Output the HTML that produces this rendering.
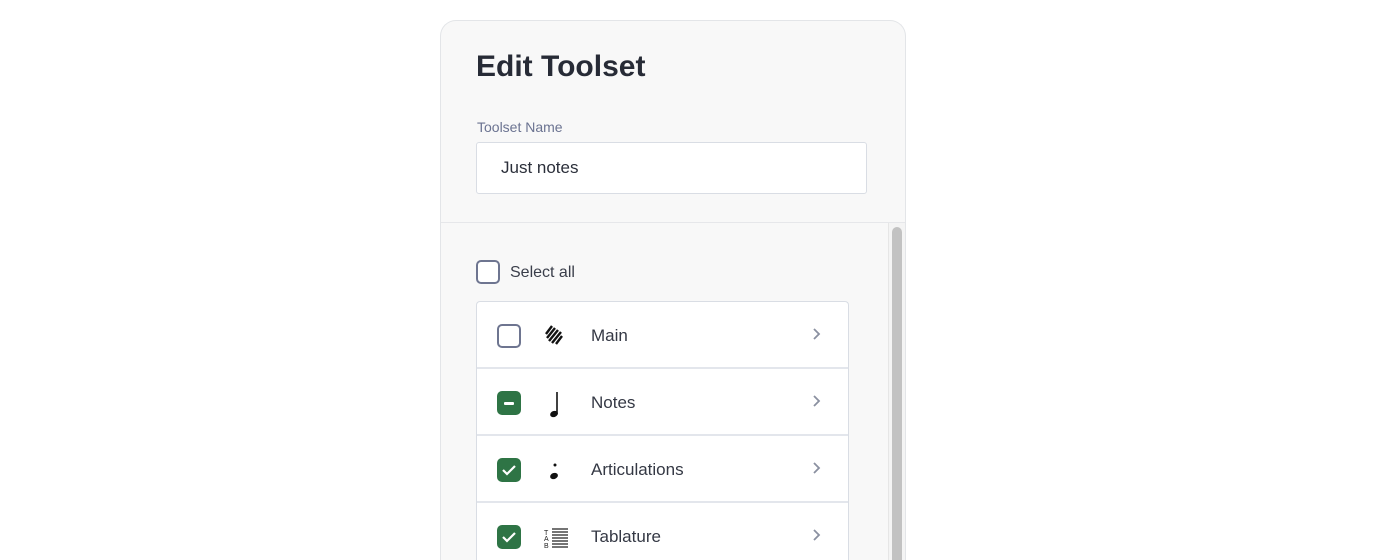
<!DOCTYPE html>
<html><head><style>
*{box-sizing:border-box;margin:0;padding:0}
html,body{width:1400px;height:560px;overflow:hidden}
body{background:#fff;font-family:"Liberation Sans",sans-serif;position:relative}
.panel{position:absolute;left:440px;top:20px;width:466px;height:540px;background:#f8f8f8;border:1px solid #e3e5e8;border-bottom:none;border-radius:16px 16px 0 0;overflow:hidden}
h1{position:absolute;left:35px;top:29px;font-size:30px;font-weight:700;color:#272b36;letter-spacing:0}
.lbl{position:absolute;left:36px;top:98px;font-size:14px;color:#6b7391}
.inp{position:absolute;left:35px;top:121px;width:391px;height:52px;background:#fff;border:1px solid #d9dde4;border-radius:3px;font-size:17px;color:#2b2f3a;padding:15px 0 0 24px}
.div{position:absolute;left:0;top:201px;width:466px;border-top:1px solid #e6e7ea}
.track{position:absolute;left:447px;top:202px;width:17px;height:340px;background:#f4f4f4;border-left:1px solid #e6e6e6}
.thumb{position:absolute;left:451px;top:206px;width:10px;height:340px;background:#c2c2c2;border-radius:5px 5px 0 0}
.cb{position:absolute;width:24px;height:24px;border:2px solid #6e7590;border-radius:5px;background:#fff}
.cb.on{background:#2e7445;border-color:#2e7445}
.sa{position:absolute;left:69px;top:243px;font-size:16px;color:#3a3e4a}
.list{position:absolute;left:35px;top:280px;width:373px;height:280px;background:#fff;border:1px solid #d9dde4;border-bottom:none;border-radius:4px 4px 0 0}
.row{position:absolute;left:0;width:371px;height:67px;border-bottom:2px solid #e3e6ec}
.row .cb{left:20px;top:22px}
.row .t{position:absolute;left:114px;top:24px;font-size:17px;color:#343844}
.row .ch{position:absolute;left:334px;top:21px}
.row .ic{position:absolute;left:66px;top:20px}
</style></head><body>
<div class="panel">
<h1>Edit Toolset</h1>
<div class="lbl">Toolset Name</div>
<div class="inp">Just notes</div>
<div class="div"></div>
<div class="track"></div><div class="thumb"></div>
<div class="cb" style="left:35px;top:239px"></div>
<div class="sa">Select all</div>
<div class="list">
 <div class="row" style="top:0">
  <div class="cb"></div>
  <svg class="ic" width="24" height="28" viewBox="0 0 24 28"><g stroke="#111" stroke-width="2.4"><path d="M3 12 L9 4M4 16 L12 6M6 19 L15 8M9 21 L18 10M13 22 L19 14"/></g></svg>
  <div class="t">Main</div>
  <svg class="ch" width="12" height="20" viewBox="0 0 12 20"><path d="M3 6l5 5-5 5" fill="none" stroke="#8a90a0" stroke-width="1.8"/></svg>
 </div>
 <div class="row" style="top:67px">
  <div class="cb on"><div style="position:absolute;left:5px;top:9px;width:10px;height:3px;background:#fff;border-radius:1px"></div></div>
  <svg class="ic" width="24" height="30" viewBox="0 0 24 30"><path d="M14 3V25" stroke="#111" stroke-width="1.6"/><ellipse cx="11" cy="25" rx="4" ry="3" fill="#111" transform="rotate(-20 11 25)"/></svg>
  <div class="t">Notes</div>
  <svg class="ch" width="12" height="20" viewBox="0 0 12 20"><path d="M3 6l5 5-5 5" fill="none" stroke="#8a90a0" stroke-width="1.8"/></svg>
 </div>
 <div class="row" style="top:134px">
  <div class="cb on"><svg width="20" height="20" viewBox="0 0 20 20"><path d="M4 10l4 4 8-8" fill="none" stroke="#fff" stroke-width="2.2"/></svg></div>
  <svg class="ic" width="24" height="30" viewBox="0 0 24 30"><circle cx="12" cy="9" r="1.5" fill="#111"/><ellipse cx="11" cy="20" rx="4" ry="3" fill="#111" transform="rotate(-20 11 20)"/></svg>
  <div class="t">Articulations</div>
  <svg class="ch" width="12" height="20" viewBox="0 0 12 20"><path d="M3 6l5 5-5 5" fill="none" stroke="#8a90a0" stroke-width="1.8"/></svg>
 </div>
 <div class="row" style="top:201px;height:79px;border-bottom:none">
  <div class="cb on"><svg width="20" height="20" viewBox="0 0 20 20"><path d="M4 10l4 4 8-8" fill="none" stroke="#fff" stroke-width="2.2"/></svg></div>
  <svg class="ic" width="26" height="30" viewBox="0 0 26 30"><g stroke="#222" stroke-width="1.3"><path d="M9 6H25M9 9H25M9 12H25M9 15H25M9 18H25M9 21H25M9 24H25"/></g><text x="1" y="12" font-size="7" font-family="Liberation Sans" fill="#222">T</text><text x="1" y="18" font-size="7" font-family="Liberation Sans" fill="#222">A</text><text x="1" y="25" font-size="7" font-family="Liberation Sans" fill="#222">B</text></svg>
  <div class="t">Tablature</div>
  <svg class="ch" width="12" height="20" viewBox="0 0 12 20"><path d="M3 6l5 5-5 5" fill="none" stroke="#8a90a0" stroke-width="1.8"/></svg>
 </div>
</div>
</div>
</body></html>
